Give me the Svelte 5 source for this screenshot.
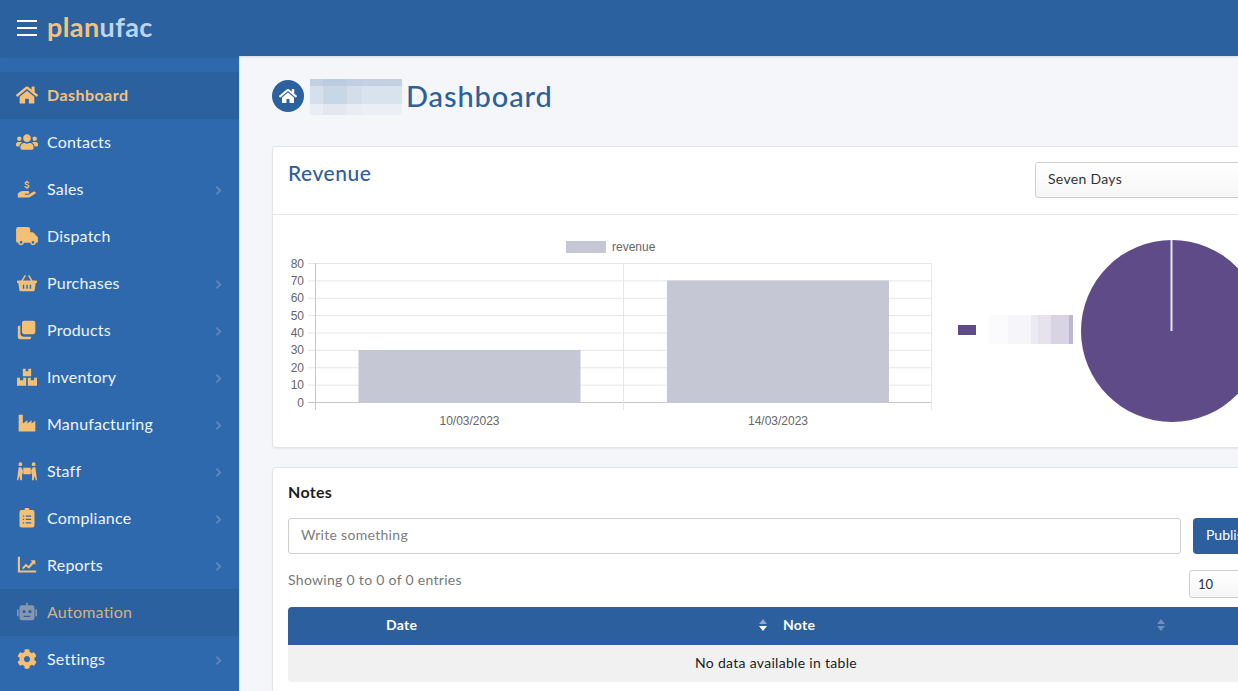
<script>
  const home = 'M280.37 148.26L96 300.11V464a16 16 0 0 0 16 16l112.06-.29a16 16 0 0 0 15.92-16V368a16 16 0 0 1 16-16h64a16 16 0 0 1 16 16v95.64a16 16 0 0 0 16 16.05L464 480a16 16 0 0 0 16-16V300L295.67 148.26a12.19 12.19 0 0 0-15.3 0zM571.6 251.47L488 182.56V44.05a12 12 0 0 0-12-12h-56a12 12 0 0 0-12 12v72.61L318.47 43a48 48 0 0 0-61 0L4.34 251.47a12 12 0 0 0-1.6 16.9l25.5 31A12 12 0 0 0 45.15 301l235.22-193.74a12.19 12.19 0 0 1 15.3 0L530.9 301a12 12 0 0 0 16.9-1.6l25.5-31a12 12 0 0 0-1.7-16.93z';
  const users = 'M96 224c35.3 0 64-28.7 64-64s-28.7-64-64-64-64 28.7-64 64 28.7 64 64 64zm448 0c35.3 0 64-28.7 64-64s-28.7-64-64-64-64 28.7-64 64 28.7 64 64 64zm32 32h-64c-17.6 0-33.5 7.1-45.1 18.6 40.3 22.1 68.9 62 75.1 109.4h66c17.7 0 32-14.3 32-32v-32c0-35.3-28.7-64-64-64zm-256 0c61.9 0 112-50.1 112-112S381.9 32 320 32 208 82.1 208 144s50.1 112 112 112zm76.8 32h-8.3c-20.8 10-43.9 16-68.5 16s-47.6-6-68.5-16h-8.3C179.6 288 128 339.6 128 403.2V432c0 26.5 21.5 48 48 48h288c26.5 0 48-21.5 48-48v-28.8c0-63.6-51.6-115.2-115.2-115.2zm-223.7-13.4C161.5 263.1 145.6 256 128 256H64c-35.3 0-64 28.7-64 64v32c0 17.7 14.3 32 32 32h65.9c6.3-47.4 34.9-87.3 75.2-109.4z';
  const cog = 'M487.4 315.7l-42.6-24.6c4.3-23.2 4.3-47 0-70.2l42.6-24.6c4.9-2.8 7.1-8.6 5.5-14-11.1-35.6-30-67.8-54.7-94.6-3.8-4.1-10-5.1-14.8-2.3L380.8 110c-17.9-15.4-38.5-27.3-60.8-35.1V25.8c0-5.6-3.9-10.5-9.4-11.7-36.7-8.2-74.3-7.8-109.2 0-5.5 1.2-9.4 6.1-9.4 11.7V75c-22.2 7.9-42.8 19.8-60.8 35.1L88.7 85.5c-4.9-2.8-11-1.9-14.8 2.3-24.7 26.7-43.6 58.9-54.7 94.6-1.7 5.4.6 11.2 5.5 14L67.3 221c-4.3 23.2-4.3 47 0 70.2l-42.6 24.6c-4.9 2.8-7.1 8.6-5.5 14 11.1 35.6 30 67.8 54.7 94.6 3.8 4.1 10 5.1 14.8 2.3l42.6-24.6c17.9 15.4 38.5 27.3 60.8 35.1v49.2c0 5.6 3.9 10.5 9.4 11.7 36.7 8.2 74.3 7.8 109.2 0 5.5-1.2 9.4-6.1 9.4-11.7v-49.2c22.2-7.9 42.8-19.8 60.8-35.1l42.6 24.6c4.9 2.8 11 1.9 14.8-2.3 24.7-26.7 43.6-58.9 54.7-94.6 1.5-5.5-.7-11.3-5.6-14.1zM256 336c-44.1 0-80-35.9-80-80s35.9-80 80-80 80 35.9 80 80-35.9 80-80 80z';

  const p = (d, vb) => ({ d, vb });
  const menu = [
    { label: 'Dashboard', icon: p(home, '0 0 576 512'), active: true },
    { label: 'Contacts', icon: p(users, '0 0 640 512') },
    { label: 'Sales', icon: p('M1 17.5c2-2 4-3 6.3-3H13c1.1 0 1.9.8 1.9 1.7s-.8 1.6-1.9 1.6H9.5v1h4.3l5.7-3.4c1-.6 2.3-.4 2.8.4.4.7.1 1.5-.6 2l-6 3.9c-.7.4-1.4.6-2.2.6H1zM11.2 2h1.5v1.1c1.2.2 2 .9 2.2 1.9l-1.5.3c-.1-.5-.6-.9-1.4-.9s-1.3.3-1.3.8.4.7 1.5 1c1.6.4 2.8.9 2.8 2.4 0 1.1-.8 1.9-2.3 2.1V12h-1.5v-1.3c-1.3-.2-2.2-1-2.4-2.1l1.5-.3c.2.7.8 1.1 1.7 1.1.9 0 1.5-.3 1.5-.9 0-.5-.5-.8-1.7-1.1-1.5-.4-2.6-.9-2.6-2.3 0-1.1.8-1.8 2-2z', '0 0 24 24') },
    { label: 'Dispatch', icon: p('M0 3.5A2.500 2.500 0 0 1 2.500 1H13a2.500 2.500 0 0 1 2.500 2.500V7H18c.6 0 1.200.3 1.600.7l3.600 3.800c.5.5.8 1.100.8 1.800V17a1.500 1.500 0 0 1-1.500 1.500h-.6a3.300 3.300 0 0 1-6.500 0H8.700a3.300 3.300 0 0 1-6.500 0H2A2 2 0 0 1 0 16.500zM5.500 16.500a1.500 1.500 0 1 0 0 3 1.500 1.500 0 0 0 0-3zm13 0a1.500 1.500 0 1 0 0 3 1.500 1.500 0 0 0 0-3z', '0 0 24 22') },
    { label: 'Purchases', icon: p('M5.200 9 9.300 2.300l1.500.9L7.300 9h9.400l-3.500-5.800 1.500-.9L18.800 9H23a1 1 0 0 1 1 1v1a1 1 0 0 1-1 1h-.6l-1.100 8.200a2 2 0 0 1-2 1.800H4.700a2 2 0 0 1-2-1.800L1.600 12H1a1 1 0 0 1-1-1v-1a1 1 0 0 1 1-1zM7 14v5h1.700v-5zm4.200 0v5h1.700v-5zm4.100 0v5H17v-5z', '0 0 24 24') },
    { label: 'Products', icon: p('M8.500 1h11A2.500 2.500 0 0 1 22 3.500v11a2.500 2.500 0 0 1-2.500 2.500h-11A2.500 2.500 0 0 1 6 14.500v-11A2.500 2.500 0 0 1 8.500 1zM2 7h2v9a4 4 0 0 0 4 4h9v1a2 2 0 0 1-2 2H4a3 3 0 0 1-3-3V8a1 1 0 0 1 1-1z', '0 0 24 24') },
    { label: 'Inventory', icon: p('M7 2h3.500v3h3V2H17v9H7zM0 13h3.500v3h4v-3H11v9.500H0zM13 13h3.500v3h4v-3H24v9.500H13z', '0 0 24 24') },
    { label: 'Manufacturing', icon: p('M2 1h5v10.500L12.500 7.500v4l5-4v4l4.500-3.500V21H2z', '0 0 24 24') },
    { label: 'Staff', icon: p('M4 1.500a2.300 2.300 0 1 1 0 4.600 2.300 2.300 0 0 1 0-4.600zM20 1.500a2.300 2.300 0 1 1 0 4.600 2.300 2.300 0 0 1 0-4.600zM7.500 8h9v8h-9zM2 7.500h3l2 3.500v4H6v8H4l-1-5-1.500 5H0l1-8zM22 7.500h-3l-2 3.500v4h1v8h2l1-5 1.500 5H24l-1-8z', '0 0 24 24') },
    { label: 'Compliance', icon: p('M9 2.500a3 3 0 0 1 6 0h3.500A2.500 2.500 0 0 1 21 5v16a2.500 2.500 0 0 1-2.500 2.500h-13A2.500 2.500 0 0 1 3 21V5a2.500 2.500 0 0 1 2.500-2.500zM7 9v1.500h1.500V9zm3.500 0v1.500H17V9zM7 13v1.500h1.500V13zm3.500 0v1.500H17V13zM7 17v1.500h1.500V17zm3.500 0v1.500H17V17z', '0 0 24 24') },
    { label: 'Reports', icon: p('M1 2h2.600v16.500H23V21H1zM6 15.500l4.500-5 3.500 2.700L18 8l-1.800-1.800H22V12l-1.900-1.900-5.700 6.300-3.500-2.700L7.500 17z', '0 0 24 24') },
    { label: 'Automation', icon: p('M11 1h2v3h5a3 3 0 0 1 3 3v12a3 3 0 0 1-3 3H6a3 3 0 0 1-3-3V7a3 3 0 0 1 3-3h5zM8.500 9.500a2 2 0 1 0 0 4 2 2 0 0 0 0-4zm7 0a2 2 0 1 0 0 4 2 2 0 0 0 0-4zM8 16.500v1.500h8v-1.500zM0 9h2v8H0zM22 9h2v8h-2z', '0 0 24 24'), muted: true },
    { label: 'Settings', icon: p(cog, '0 0 512 512') }
  ];
  const chevrons = new Set(['Sales','Purchases','Products','Inventory','Manufacturing','Staff','Compliance','Reports','Settings']);

  const ticks = [80,70,60,50,40,30,20,10,0];
  const tickY = (i) => 263.5 + i * (402.5 - 263.5) / 8;
</script>

<div class="page">
  <header class="topbar">
    <button class="burger" aria-label="Menu"><i></i><i></i><i></i></button>
    <div class="logo"><span class="plan">plan</span><span class="ufac">ufac</span></div>
  </header>

  <div class="body">
    <nav class="sidebar">
      {#each menu as m}
        <a class="item" class:active={m.active} class:muted={m.muted} href="#top">
          <span class="ico">
            <svg viewBox={m.icon.vb} aria-hidden="true"><path d={m.icon.d} fill="currentColor" fill-rule="evenodd" /></svg>
          </span>
          <span class="lbl">{m.label}</span>
          {#if chevrons.has(m.label)}
            <svg class="chev" viewBox="0 0 8 12" aria-hidden="true"><path d="M1.500 1.500 6 6l-4.500 4.500" fill="none" stroke="currentColor" stroke-width="2.200" /></svg>
          {/if}
        </a>
      {/each}
    </nav>

    <main class="main">
      <div class="inner">
        <div class="title">
          <span class="homeball">
            <svg viewBox="0 0 576 512" aria-hidden="true"><path d={home} fill="#fff" /></svg>
          </span>
          <span class="blurname"></span>
          <h1>Dashboard</h1>
        </div>

        <section class="card revenue">
          <div class="card-head">
            <h2>Revenue</h2>
            <div class="select range">Seven Days</div>
          </div>
          <div class="charts">
            <svg class="bar" width="660" height="232" viewBox="0 0 660 232" aria-label="Revenue by date">
              <g transform="translate(-288,-215)">
                <rect x="566" y="241" width="40" height="12" fill="#c5c8d4" />
                <text x="612" y="251" class="ct">revenue</text>
                {#each ticks as t, i}
                  <line x1="308" x2="932" y1={tickY(i)} y2={tickY(i)} stroke={t === 0 ? '#c9c9c9' : '#e6e6e6'} />
                  <text x="304" y={tickY(i) + 4} text-anchor="end" class="ct">{t}</text>
                {/each}
                <line x1="315.500" x2="315.500" y1="263" y2="410" stroke="#c9c9c9" />
                <line x1="623.500" x2="623.500" y1="263" y2="410" stroke="#e6e6e6" />
                <line x1="931.500" x2="931.500" y1="263" y2="410" stroke="#e6e6e6" />
                <rect x="358.500" y="350" width="222" height="52.500" fill="#c5c8d4" />
                <rect x="667" y="280.500" width="222" height="122" fill="#c5c8d4" />
                <text x="469.500" y="425" text-anchor="middle" class="ct">10/03/2023</text>
                <text x="778" y="425" text-anchor="middle" class="ct">14/03/2023</text>
              </g>
            </svg>
            <div class="pie-legend">
              <span class="swatch"></span>
              <span class="blurlegend"></span>
            </div>
            <svg class="pie" width="182" height="182" viewBox="0 0 182 182" aria-label="Revenue share">
              <circle cx="91" cy="91" r="91" fill="#5f4b87" />
              <line x1="90.500" x2="90.500" y1="0" y2="91" stroke="#e9e6ef" stroke-width="2" />
            </svg>
          </div>
        </section>

        <section class="card notes">
          <h3>Notes</h3>
          <div class="note-row">
            <div class="input">Write something</div>
            <button class="publish">Publish</button>
          </div>
          <div class="info-row">
            <span class="info">Showing 0 to 0 of 0 entries</span>
            <div class="select len">10</div>
          </div>
          <div class="table">
            <div class="thead">
              <div class="th date">
                <span>Date</span>
                <svg class="sort" viewBox="0 0 10 14" aria-hidden="true"><path d="M5 1 9 6H1z" fill="#8eaad0" /><path d="M5 13 1 8h8z" fill="#fff" /></svg>
              </div>
              <div class="th note">
                <span>Note</span>
                <svg class="sort" viewBox="0 0 10 14" aria-hidden="true"><path d="M5 1 9 6H1z" fill="#6f90bd" /><path d="M5 13 1 8h8z" fill="#6f90bd" /></svg>
              </div>
            </div>
            <div class="empty">No data available in table</div>
          </div>
        </section>
      </div>
    </main>
  </div>
</div>

<style>
  :global(body) { margin: 0; background: #f4f6f9; }
  * { box-sizing: border-box; }
  .page {
    width: 1238px; height: 691px; overflow: hidden;
    display: flex; flex-direction: column;
    font-family: Lato, "Noto Sans", sans-serif;
    color: #222;
  }
  .topbar {
    height: 56px; flex: none; background: #2c619f;
    display: flex; align-items: center; padding-left: 17px; gap: 10px;
    box-shadow: 0 1px 2px rgba(0,0,0,.12);
    position: relative;
  }
  .burger { width: 20px; height: 16px; padding: 0; border: 0; background: none; display: flex; flex-direction: column; justify-content: space-between; }
  .burger i { display: block; height: 2px; background: #fff; }
  .logo { font-size: 27px; font-weight: 700; line-height: 1; margin-top: -3px; letter-spacing: .4px; }
  .plan { color: #f3c27f; }
  .ufac { color: #bcd5f3; }

  .body { flex: 1; display: flex; min-height: 0; }
  .sidebar {
    width: 240px; flex: none; background: #2f69ad;
    border-right: 1px solid #dfe6ef;
    padding-top: 16px;
  }
  .item {
    height: 47px; display: flex; align-items: center; padding-bottom: 2px;
    text-decoration: none; color: #eef5fd; font-size: 16px;
    position: relative; letter-spacing: .22px;
  }
  .item.active { background: #2c619f; color: #f1c27f; font-weight: 700; letter-spacing: .45px; }
  .item.muted { background: #2c619f; color: #d2b27f; }
  .ico { width: 47px; padding-left: 16px; flex: none; display: flex; color: #f4c077; }
  .muted .ico { color: #8797b0; }
  .ico svg { width: 22px; height: 20px; }
  .chev { position: absolute; left: 215px; top: 19px; width: 7px; height: 11px; color: #5a86c0; }

  .main { flex: 1; min-width: 0; overflow: hidden; padding: 24px 0 0 32px; background: #f4f6f9; }
  .inner { width: 1008px; }
  .title { height: 36px; display: flex; align-items: flex-start; }
  .homeball {
    width: 32px; height: 32px; border-radius: 50%; background: #2c619f;
    display: flex; align-items: center; justify-content: center; margin-right: 6px;
  }
  .homeball svg { width: 18px; height: 16px; }
  .blurname {
    width: 92px; height: 36px; margin-top: -1px;
    background:
      linear-gradient(180deg, rgba(176,196,218,.55) 0 19%, transparent 19% 70%, rgba(255,255,255,.45) 70% 100%),
      linear-gradient(90deg, #d6e0ec 0 14%, #c9d6e5 14% 40%, #d3deea 40% 56%, #d9e3ee 56% 100%);
  }
  h1 { margin: -2px 0 0 4px; font-size: 29px; font-weight: 500; color: #2f5f9b; letter-spacing: .9px; line-height: 36px; }

  .card { background: #fff; border: 1px solid #e2e4e8; border-radius: 4px; box-shadow: 0 1px 2px rgba(0,0,0,.06); }
  .revenue { margin-top: 30px; height: 302px; }
  .card-head {
    height: 68px; border-bottom: 1px solid #e3e5e8;
    display: flex; justify-content: space-between; padding: 15px 0 0 15px;
  }
  h2 { margin: -2px 0 0; font-size: 21px; font-weight: 500; color: #2f5f9b; letter-spacing: .5px; line-height: 25px; }
  .select {
    background: linear-gradient(#fff, #f6f6f6); border: 1px solid #cfcfcf; border-radius: 3px;
    color: #333; font-size: 14px; display: flex; align-items: center;
  }
  .range { width: 244px; height: 36px; padding: 0 0 4px 12px; letter-spacing: .3px; }
  .charts { display: flex; position: relative; padding-left: 15px; height: 232px; }
  .bar { flex: none; display: block; }
  .ct { font-family: "Liberation Sans", Arial, sans-serif; font-size: 12px; fill: #666; }
  .pie-legend { position: absolute; left: 685px; top: 100px; height: 29px; display: flex; align-items: center; gap: 4px; }
  .swatch { width: 18px; height: 10px; background: #5f4b87; }
  .blurlegend {
    width: 93px; height: 29px;
    background: linear-gradient(90deg, #fff 0 10%, #fbfafc 10% 30%, #f6f5f9 30% 55%, #eceaf2 55% 62%, #e6e3ee 62% 76%, #d8d4e3 76% 96%, #bdb8cf 96%);
  }
  .pie { position: absolute; left: 808px; top: 25px; }

  .notes { margin-top: 19px; height: 240px; padding: 14px 15px 0; }
  h3 { margin: 0; font-size: 16px; font-weight: 700; color: #1d1d1d; line-height: 20px; letter-spacing: .3px; }
  .note-row { display: flex; gap: 12px; margin-top: 16px; }
  .input {
    width: 893px; height: 36px; border: 1px solid #cfcfcf; border-radius: 3px;
    display: flex; align-items: center; padding: 0 0 4px 12px;
    font-size: 14px; color: #7d7d7d; letter-spacing: .3px;
  }
  .publish {
    width: 71px; height: 36px; border: 0; border-radius: 4px; background: #2c5f9e;
    color: #fff; font: inherit; font-size: 14px; padding: 0 0 3px 13px; flex: none; text-align: left;
  }
  .info-row { display: flex; justify-content: space-between; align-items: flex-start; margin-top: 16px; }
  .info { font-size: 14px; color: #777; line-height: 20px; letter-spacing: .3px; }
  .len { width: 75px; height: 28px; padding-left: 8px; font-size: 13px; }
  .table { margin-top: 9px; width: 976px; }
  .thead { height: 38px; background: #2c5f9e; border-radius: 4px 0 0 0; display: flex; }
  .th {
    display: flex; align-items: center; position: relative; padding-bottom: 4px;
    color: #fff; font-size: 14px; font-weight: 700; letter-spacing: .3px;
  }
  .date { width: 480px; padding-left: 98px; }
  .note { flex: 1; padding-left: 15px; }
  .sort { position: absolute; top: 11px; width: 10px; height: 14px; }
  .date .sort { left: 470px; }
  .note .sort { left: 388px; }
  .empty {
    height: 37px; background: #f1f1f1; border-radius: 0 0 0 4px; padding-bottom: 2px;
    display: flex; align-items: center; justify-content: center;
    font-size: 14px; color: #222; letter-spacing: .3px;
  }
</style>
